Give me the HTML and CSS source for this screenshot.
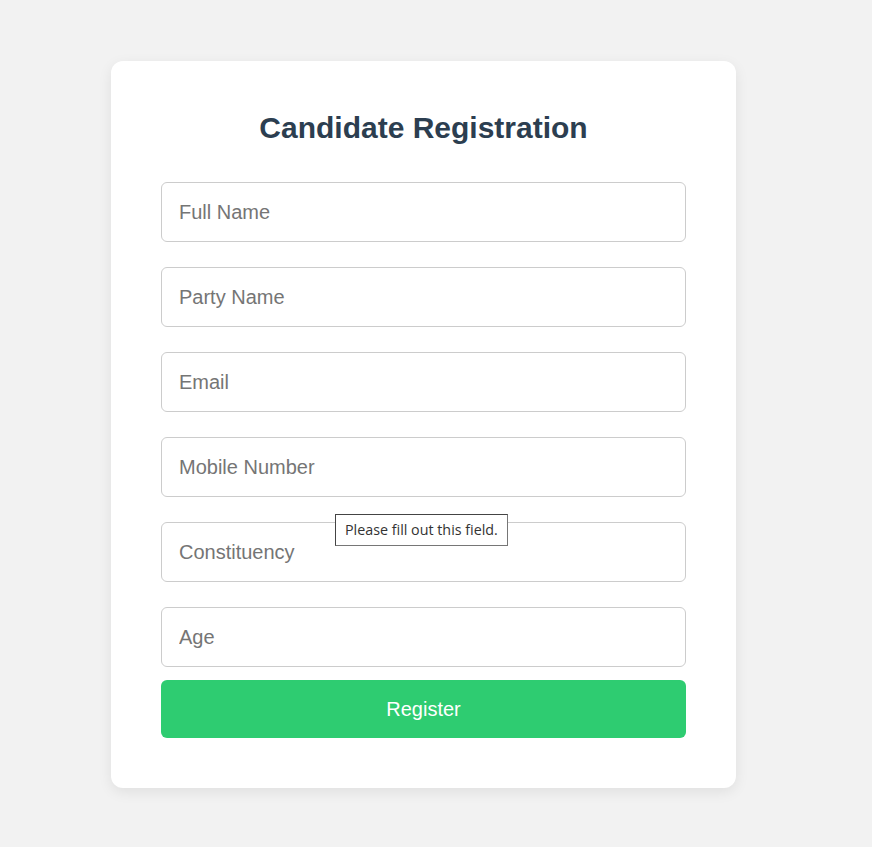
FILE: index.html
```html
<!DOCTYPE html>
<html lang="en">
<head>
<meta charset="utf-8">
<title>Candidate Registration</title>
<link rel="stylesheet" href="styles.css">
</head>
<body>
<main class="page">
  <section class="card">
    <h2 class="title">Candidate Registration</h2>
    <form class="form">
      <input class="field" type="text" placeholder="Full Name">
      <input class="field" type="text" placeholder="Party Name">
      <input class="field" type="email" placeholder="Email">
      <input class="field" type="text" placeholder="Mobile Number">
      <div class="field-wrap">
        <input class="field" type="text" placeholder="Constituency">
        <div class="bubble">Please fill out this field.</div>
      </div>
      <input class="field field-last" type="number" placeholder="Age">
      <button class="submit" type="button">Register</button>
    </form>
  </section>
</main>
</body>
</html>
```

FILE: styles.css
```css
html, body {
  margin: 0;
  padding: 0;
  background: #f2f2f2;
  font-family: "Liberation Sans", Arial, sans-serif;
}

.page {
  padding: 61px 0 60px 111px;
}

.card {
  width: 625px;
  box-sizing: border-box;
  background: #ffffff;
  border-radius: 12px;
  box-shadow: 0 4px 14px rgba(0, 0, 0, 0.08);
  padding: 50px 50px 50px;
}

.title {
  margin: 0 0 37px;
  text-align: center;
  font-size: 30px;
  font-weight: bold;
  color: #2c3e50;
  line-height: 34px;
}

.form {
  display: flex;
  flex-direction: column;
}

.field-wrap {
  position: relative;
}

.field {
  display: block;
  width: 100%;
  height: 60px;
  box-sizing: border-box;
  margin: 0 0 25px;
  padding: 0 17px;
  border: 1px solid #cccccc;
  border-radius: 6px;
  font-family: "Liberation Sans", Arial, sans-serif;
  font-size: 20px;
  color: #333;
  background: #fff;
  outline: none;
}

.field::placeholder {
  color: #757575;
}

.field-last {
  margin-bottom: 13px;
}

.field::-webkit-outer-spin-button,
.field::-webkit-inner-spin-button {
  -webkit-appearance: none;
  margin: 0;
}

.submit {
  display: block;
  width: 100%;
  height: 58px;
  padding: 0;
  border: none;
  border-radius: 6px;
  background: #2ecc71;
  color: #ffffff;
  font-family: "Liberation Sans", Arial, sans-serif;
  font-size: 20px;
  line-height: 56px;
  cursor: pointer;
}

.bubble {
  position: absolute;
  left: 174px;
  top: -8px;
  width: 173px;
  height: 32px;
  box-sizing: border-box;
  border: 1px solid #767676;
  border-top-color: #444;
  border-left-color: #444;
  background: #ffffff;
  color: #333333;
  font-family: "Open Sans", "Noto Sans", sans-serif;
  font-size: 14.3px;
  line-height: 30px;
  padding: 0 0 0 9px;
  white-space: nowrap;
}
```
